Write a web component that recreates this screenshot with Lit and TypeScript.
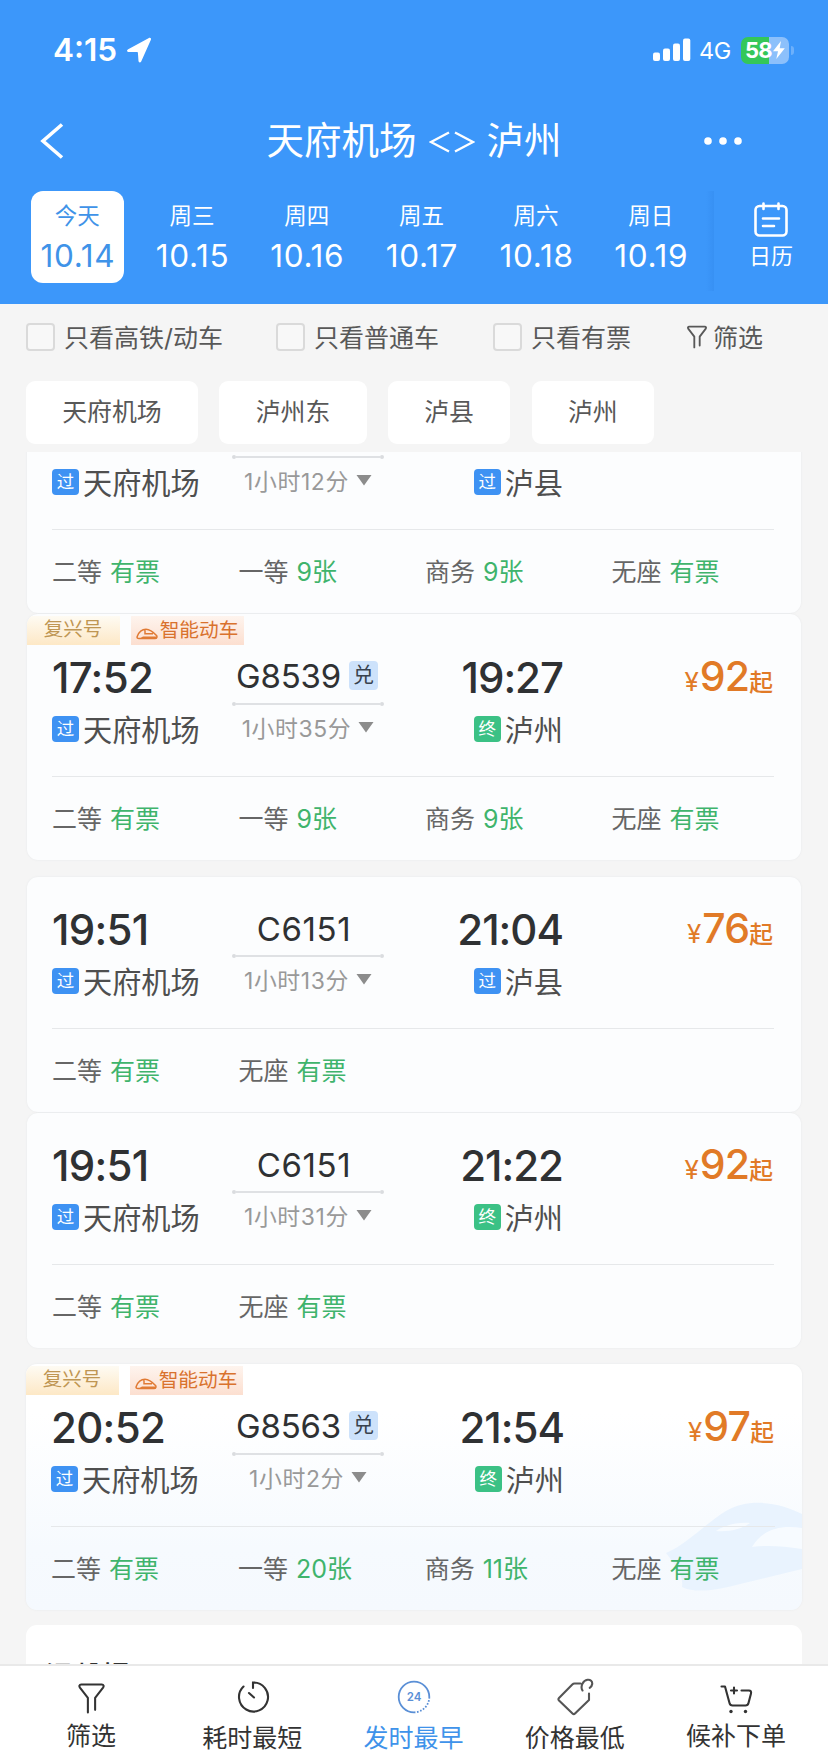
import { LitElement, html, css, svg, nothing } from "lit";
import { customElement, property } from "lit/decorators.js";
import { classMap } from "lit/directives/class-map.js";

interface Seat { name: string; left: string; }
interface Train {
  no?: string; dep?: string; arr?: string; took: string;
  to: string; last: boolean; price?: string;
  fuxing?: boolean; tinted?: boolean; seats: Seat[];
}

const s = (name: string, left: string): Seat => ({ name, left });

const TRAINS: Train[] = [
  { took: "1小时12分", to: "泸县", last: false,
    seats: [s("二等", "有票"), s("一等", "9张"), s("商务", "9张"), s("无座", "有票")] },
  { no: "G8539", dep: "17:52", arr: "19:27", took: "1小时35分", to: "泸州", last: true, price: "92", fuxing: true,
    seats: [s("二等", "有票"), s("一等", "9张"), s("商务", "9张"), s("无座", "有票")] },
  { no: "C6151", dep: "19:51", arr: "21:04", took: "1小时13分", to: "泸县", last: false, price: "76",
    seats: [s("二等", "有票"), s("无座", "有票")] },
  { no: "C6151", dep: "19:51", arr: "21:22", took: "1小时31分", to: "泸州", last: true, price: "92",
    seats: [s("二等", "有票"), s("无座", "有票")] },
  { no: "G8563", dep: "20:52", arr: "21:54", took: "1小时2分", to: "泸州", last: true, price: "97", fuxing: true, tinted: true,
    seats: [s("二等", "有票"), s("一等", "20张"), s("商务", "11张"), s("无座", "有票")] },
];

@customElement("status-bar")
class StatusBar extends LitElement {
  static styles = css`
    :host { display: flex; height: 100px; padding: 0 34px 0 53px; align-items: center; color: #fff; }
    .time { font-size: 31.500px; font-weight: 600; line-height: 40px; letter-spacing: 0; }
    .nav { margin-left: 9px; }
    .push { flex: 1; }
    .net { font-size: 23.500px; line-height: 40px; margin: 1px 10px 0 8px; letter-spacing: -0.400px; }
    .battery { display: flex; align-items: center; }
    .cell { display: flex; align-items: center; box-sizing: border-box; width: 48px; height: 27px; border-radius: 7px; padding-left: 4px;
      background: linear-gradient(90deg, #34c759 0 28px, #8cc0fb 28px); font-size: 22px; font-weight: 650; line-height: 27px; letter-spacing: -0.800px; }
    .nub { width: 3px; height: 9px; margin-left: 2px; border-radius: 0 3px 3px 0; background: #6db0fb; }
  `;
  render() {
    return html`
      <span class="time">4:15</span>
      <svg class="nav" width="26" height="26" viewBox="0 0 26 26"><path d="M22.500 1.200 2.200 12.300c-1.800 1-1.200 2.700.5 2.700l8.500.1c.4 0 .7.2.7.7l.6 8.300c.2 1.700 2 1.900 2.700.3L24.900 2.800c.6-1.500-.8-2.500-2.400-1.600z" fill="#fff"/></svg>
      <span class="push"></span>
      <svg width="38" height="24" viewBox="0 0 38 24" fill="#fff">
        <rect x="0" y="14.500" width="7" height="8.500" rx="2"/><rect x="10" y="10.500" width="7" height="12.500" rx="2"/>
        <rect x="20" y="5.500" width="7" height="17.500" rx="2"/><rect x="30" y="0.500" width="7.300" height="22.500" rx="2"/>
      </svg>
      <span class="net">4G</span>
      <span class="battery"><span class="cell">58<svg width="14" height="20" viewBox="0 0 14 20"><path d="M9 1 1 11.200h5L4.300 19 12.800 8.300H7.700z" fill="#fff"/></svg></span><span class="nub"></span></span>`;
  }
}

@customElement("date-strip")
class DateStrip extends LitElement {
  static styles = css`
    :host { display: flex; height: 113px; padding-left: 20px; color: #fff; }
    .day { width: 114.700px; display: flex; justify-content: center; }
    .pill { box-sizing: border-box; width: 93px; height: 92px; border-radius: 12px; padding-top: 9px; text-align: center; white-space: nowrap; }
    .on { background: #fff; color: #3f93e8; }
    .week { font-size: 22.500px; line-height: 32px; }
    .num { font-size: 31.500px; line-height: 36px; margin: 6px -11px 0 -10px; letter-spacing: 0.700px; }
    .cal { flex: 1; box-sizing: border-box; display: flex; flex-direction: column; align-items: center; padding: 11px 0 0 0; }
    .edge { width: 8px; height: 100px; margin-left: -2px; background: linear-gradient(90deg, rgba(30, 110, 210, 0), rgba(30, 110, 210, .16)); }
    .name { font-size: 22px; line-height: 32px; margin-top: 2px; }
  `;
  render() {
    const days = [["今天", "10.14"], ["周三", "10.15"], ["周四", "10.16"], ["周五", "10.17"], ["周六", "10.18"], ["周日", "10.19"]];
    return html`
      ${days.map(([w, d], i) => html`<div class="day"><div class=${classMap({ pill: true, on: i === 0 })}>
        <div class="week">${w}</div><div class="num">${d}</div></div></div>`)}
      <div class="edge"></div>
      <div class="cal">
        <svg width="34" height="36" viewBox="0 0 34 36" fill="none" stroke="#fff" stroke-width="2.600" stroke-linecap="round">
          <rect x="1.500" y="4" width="31" height="29.500" rx="4"/><path d="M9.500 1.500v5.500M24.500 1.500v5.500M9 16.500h16M9 24h11"/>
        </svg>
        <div class="name">日历</div>
      </div>`;
  }
}

const funnel = (w: number, h: number, stroke: number) => svg`
  <svg width=${w} height=${h} viewBox="0 0 26 30" fill="none" stroke="currentColor" stroke-width=${stroke} stroke-linecap="round" stroke-linejoin="round">
    <path d="M9.500 28.500V14.500L1.800 4.500C.8 3 1.200 1.500 3 1.500h20c1.800 0 2.200 1.500 1.200 3l-7.700 10V26"/></svg>`;

@customElement("filter-row")
class FilterRow extends LitElement {
  static styles = css`
    .checks { display: grid; grid-template-columns: 250px 217px 194px auto; padding: 16px 0 0 26px; height: 61px; box-sizing: border-box; }
    .item { display: flex; align-items: center; height: 34px; font-size: 25px; color: #585858; white-space: nowrap; gap: 10px; }
    .word { line-height: 32px; margin-top: 1px; }
    .box { box-sizing: border-box; width: 29px; height: 28px; border: 2px solid #dadada; border-radius: 4px; background: #f8f8f8; margin-right: -1px; }
    .sieve { gap: 6px; }
    .chips { display: flex; gap: 21.500px; padding: 16px 26px 8px; }
    .chip { box-sizing: border-box; height: 63px; line-height: 63px; border-radius: 9px; padding: 0 36.200px; background: #fff; font-size: 24.900px; color: #585858; }
  `;
  render() {
    return html`
      <div class="checks">
        ${["只看高铁/动车", "只看普通车", "只看有票"].map((t) => html`<div class="item"><span class="box"></span><span class="word">${t}</span></div>`)}
        <div class="item sieve">${funnel(20, 24, 2.400)}<span class="word">筛选</span></div>
      </div>
      <div class="chips">${["天府机场", "泸州东", "泸县", "泸州"].map((t) => html`<div class="chip">${t}</div>`)}</div>`;
  }
}

@customElement("train-card")
class TrainCard extends LitElement {
  @property({ attribute: false }) train!: Train;
  static styles = css`
    :host { display: block; }
    .card { position: relative; overflow: hidden; margin: 0 27px; border-radius: 11px; background: #fcfdfe; padding: 25px 27px 0 25px; box-shadow: 0 0 2px rgba(120, 140, 160, .12); }
    .tagged { padding-top: 0; }
    .tinted { margin: 0 26px; background: linear-gradient(#fff 20%, #f6fafe 75%, #f5f9fe); }
    .cloud { position: absolute; right: 0; bottom: 17px; }
    .tags { display: flex; gap: 11px; height: 36px; margin-left: -26px; padding-top: 2px; box-sizing: border-box; font-size: 19.500px; line-height: 27px; }
    .tag { display: flex; justify-content: center; height: 29px; box-sizing: border-box; }
    .fx { width: 94px; color: #bf9653; background: linear-gradient(#fefbf3, #fde8c6); }
    .smart { width: 113px; color: #d9722e; gap: 2px; background: linear-gradient(#fef4ee, #fcdfd0); font-size: 19.700px; line-height: 28px; padding-right: 1px; }
    .nose { margin-top: 12px; }
    .trip { position: relative; display: grid; grid-template-columns: 180px 152px 179px 1fr; height: 126px; align-items: start; box-sizing: border-box; }
    .tinted .trip { grid-template-columns: 181px 152px 180px 1fr; }
    .trip, .seats { z-index: 1; }
    .top { height: 54px; display: flex; align-items: center; }
    .sub { height: 50px; display: flex; align-items: center; white-space: nowrap; }
    .clock { font-size: 42px; font-weight: 460; color: #2f3133; letter-spacing: -0.700px; }
    .right .clock { letter-spacing: -1px; }
    .mid .top { box-sizing: border-box; justify-content: center; font-size: 33px; color: #2f3133; gap: 8px; letter-spacing: -0.200px; padding: 0 2px 3px 0; }
    .mid .plain { letter-spacing: 0.600px; padding-right: 8px; padding-bottom: 1px; }
    .mid .sub { justify-content: center; font-size: 22.900px; letter-spacing: 0.600px; color: #999; gap: 7px; box-sizing: border-box; padding-bottom: 4px; }
    .swap { width: 29px; height: 29px; border-radius: 4px; background: #cde2fb; color: #39424e; font-size: 21px; line-height: 28px; text-align: center; letter-spacing: 0; }
    .rail { height: 6px; margin: -3px 0; display: flex; align-items: center; }
    .rail::before, .rail::after { content: ""; width: 4px; height: 4px; border-radius: 50%; background: #dadcdf; }
    .bar { flex: 1; height: 2px; background: #dfe1e4; }
    .right { display: flex; flex-direction: column; align-items: flex-end; }
    .kind { width: 27px; height: 26px; border-radius: 4px; background: #3e92f3; color: #fff; font-size: 17.500px; line-height: 25px; text-align: center; margin-right: 4px; }
    .end { background: #3bc185; }
    .place { font-size: 29.200px; line-height: 40px; color: #4f4f4f; margin-top: 3px; }
    .price { display: flex; justify-content: flex-end; align-items: baseline; height: 54px; line-height: 53px; color: #e17a27; padding-right: 1px; }
    .yen { font-size: 26px; }
    .sum { font-size: 41px; font-weight: 460; letter-spacing: -0.800px; margin-left: 1px; }
    .from { font-size: 23.800px; font-weight: 500; }
    .seats { position: relative; display: grid; grid-template-columns: 186.500px 186.500px 186.500px 1fr; border-top: 1px solid #e6e8ea; height: 84px; padding-bottom: 4px; box-sizing: border-box; align-items: center; font-size: 25px; color: #666; white-space: nowrap; }
    .tinted .seats { grid-template-columns: 187px 186.700px 186.700px 1fr; }
    .seat { display: flex; gap: 8px; }
    .left { color: #3fb46c; }
  `;
  render() {
    const t = this.train;
    return html`<div class=${classMap({ card: true, tagged: !!t.fuxing, tinted: !!t.tinted })}>
      ${t.tinted ? html`<svg class="cloud" width="136" height="92" viewBox="0 0 136 92">
        <path d="M0 52C20 44 40 22 60 10 84-4 115 2 136 13V68L70 84C48 90 28 92 16 86 18 74 8 62 0 52z" fill="#e9f3fe"/>
        <path d="M50 30c10-7 24-9 34-8-8 6-20 9-34 8zM86 46c12-20 32-22 50-19v21c-20-3-34-4-50-2z" fill="#f7fbff"/></svg>` : nothing}
      ${t.fuxing ? html`<div class="tags"><span class="tag fx">复兴号</span><span class="tag smart">
        <svg class="nose" width="22" height="12" viewBox="0 0 22 12" fill="none" stroke="#e07a34" stroke-width="1.500"><path d="M1.200 8.500C3 3.500 6 1.200 10 1.200c4 0 7.500 3 10.500 6.300 1 1.500.2 3-1.500 3H3C1.500 10.500.8 9.700 1.200 8.500zM9 1.500v4.300h8"/><path d="M7 8.500h13.500v2.500H3z" fill="#e07a34" stroke="none"/></svg>智能动车</span></div>` : nothing}
      <div class="trip">
        <div><div class="top clock">${t.dep ?? nothing}</div><div class="sub"><span class="kind">过</span><span class="place">天府机场</span></div></div>
        <div class="mid"><div class=${classMap({ top: true, plain: !t.fuxing })}>${t.no ?? nothing}${t.fuxing ? html`<span class="swap">兑</span>` : nothing}</div>
          <div class="rail"><span class="bar"></span></div>
          <div class="sub">${t.took}<svg width="16" height="12" viewBox="0 0 16 12"><path d="M.5 1h15L8 11.500z" fill="#8c8c8c"/></svg></div></div>
        <div class="right"><div class="top clock">${t.arr ?? nothing}</div><div class="sub"><span class=${classMap({ kind: true, end: t.last })}>${t.last ? "终" : "过"}</span><span class="place">${t.to}</span></div></div>
        ${t.price ? html`<div class="price"><span class="yen">¥</span><span class="sum">${t.price}</span><span class="from">起</span></div>` : nothing}
      </div>
      <div class="seats">${t.seats.map((x) => html`<div class="seat"><span>${x.name}</span><span class="left">${x.left}</span></div>`)}</div>
    </div>`;
  }
}

@customElement("tab-bar")
class TabBar extends LitElement {
  static styles = css`
    :host { display: grid; grid-template-columns: repeat(5, 161.300px); justify-content: center; height: 88px; box-sizing: border-box; border-top: 2px solid #e9e9e9; background: #fff; color: #333; }
    .tab { display: flex; flex-direction: column; align-items: center; padding-top: 11px; font-size: 25px; white-space: nowrap; }
    .icon { height: 40px; display: flex; align-items: center; }
    .label { line-height: 36px; margin: 3px 1px 0 0; }
    .up { margin-top: 1px; }
    .low { padding-top: 3px; box-sizing: border-box; }
    .on { color: #3f93ea; }
    .h24 { font-family: Inter, sans-serif; font-size: 11.500px; font-weight: 600; }
  `;
  render() {
    const tabs = [
      { label: "筛选", up: true, icon: funnel(27, 31, 2) },
      { label: "耗时最短", icon: svg`<svg width="34" height="34" viewBox="0 0 34 34" fill="none" stroke="currentColor" stroke-width="2.100" stroke-linecap="round"><path d="M17 8V2.500a14.500 14.500 0 1 1-9.500 4M13 13l5 4.500"/></svg>` },
      { label: "发时最早", on: true, icon: svg`<svg width="34" height="34" viewBox="0 0 34 34" fill="none" stroke="#5a8fd6" stroke-width="1.800"><path d="M17 32.300A15.300 15.300 0 1 1 32.300 17"/><path d="M32.300 17A15.300 15.300 0 0 1 17 32.300" stroke-dasharray="1.600 1.600"/><text class="h24" x="17" y="21.300" text-anchor="middle" fill="#5a8fd6" stroke="none">24</text></svg>` },
      { label: "价格最低", icon: svg`<svg width="38" height="38" viewBox="0 0 38 38" fill="none" stroke="#555" stroke-width="2.100" stroke-linecap="round" stroke-linejoin="round"><path d="M24.500 5.500H18.500C17.500 5.500 17 5.800 16.300 6.500L3 20c-.8.800-.8 1.700 0 2.500L16.500 35.500c.8.8 1.700.8 2.500 0L33 22V15.500M26.500 12.500C24 8.500 27 2.500 31.500 1.800c3-.4 5 1.700 4.700 4.200-.2 1.700-1.200 3-2.500 3.800"/></svg>` },
      { label: "候补下单", up: true, icon: svg`<svg width="34" height="32" viewBox="0 0 34 32" fill="none" stroke="currentColor" stroke-width="2.100" stroke-linecap="round" stroke-linejoin="round"><path d="M1.500 3.500H5L9.500 20c.5 2 1.500 2.500 3 2.500h13c1.500 0 2.500-.5 3-2.500L31 10.500c.5-2-.5-3-2-3h-7.500M11 7.500h6M14 4.500v6"/><circle cx="11" cy="28.500" r="1.700" fill="currentColor" stroke="none"/><circle cx="25.500" cy="28.500" r="1.700" fill="currentColor" stroke="none"/></svg>` },
    ];
    return tabs.map((t: any) => html`<div class=${classMap({ tab: true, on: !!t.on })}><div class=${classMap({ icon: true, low: !!t.up })}>${t.icon}</div><div class=${classMap({ label: true, up: !!t.up })}>${t.label}</div></div>`);
  }
}

@customElement("app-root")
class AppRoot extends LitElement {
  static styles = css`
    :host { display: flex; flex-direction: column; width: 828px; height: 1752px; overflow: hidden; background: #f5f5f5; font-family: Inter, "Noto Sans CJK SC", sans-serif; }
    .head { height: 304px; background: #3c97fa; flex: none; }
    .bar { display: grid; grid-template-columns: 90px 1fr 90px; align-items: center; height: 91px; color: #fff; padding: 0 40px 10px; box-sizing: border-box; }
    .title { font-size: 37.500px; line-height: 60px; text-align: center; white-space: nowrap; display: flex; justify-content: center; align-items: center; gap: 12px; }
    .arrows { margin-top: 3px; }
    .more { justify-self: end; margin-right: 46px; }
    .list { flex: 1; min-height: 0; overflow: hidden; }
    .first { margin-top: -74px; }
    .tight { margin-top: 1px; }
    .near { margin-top: 16px; }
    .far { margin-top: 17px; }
    .tips { display: flex; margin: 15px 26px 0; padding: 34px 19px 0; box-sizing: border-box; height: 42px; border-radius: 11px 11px 0 0; background: #fff; font-size: 28.500px; font-weight: 500; line-height: 36px; color: #333; overflow: hidden; }
  `;
  render() {
    const gaps = ["first", "tight", "far", "tight", "near"];
    return html`
      <div class="head">
        <status-bar></status-bar>
        <div class="bar">
          <svg width="24" height="36" viewBox="0 0 24 36" fill="none" stroke="#fff" stroke-width="3.600"><path d="M22 1.500 3 18l19 16.500"/></svg>
          <div class="title"><span>天府机场</span><svg class="arrows" width="46" height="22" viewBox="0 0 46 22" fill="none" stroke="#fff" stroke-width="2.400"><path d="M20 1.500 2 11l18 9.500M26 1.500 44 11 26 20.500"/></svg><span>泸州</span></div>
          <svg class="more" width="38" height="10" viewBox="0 0 38 10" fill="#fff"><circle cx="4" cy="5" r="3.800"/><circle cx="19" cy="5" r="3.800"/><circle cx="34" cy="5" r="3.800"/></svg>
        </div>
        <date-strip></date-strip>
      </div>
      <filter-row></filter-row>
      <div class="list">
        ${TRAINS.map((t, i) => html`<train-card class=${gaps[i]} .train=${t}></train-card>`)}
        <div class="tips">温馨提示</div>
      </div>
      <tab-bar></tab-bar>`;
  }
}
